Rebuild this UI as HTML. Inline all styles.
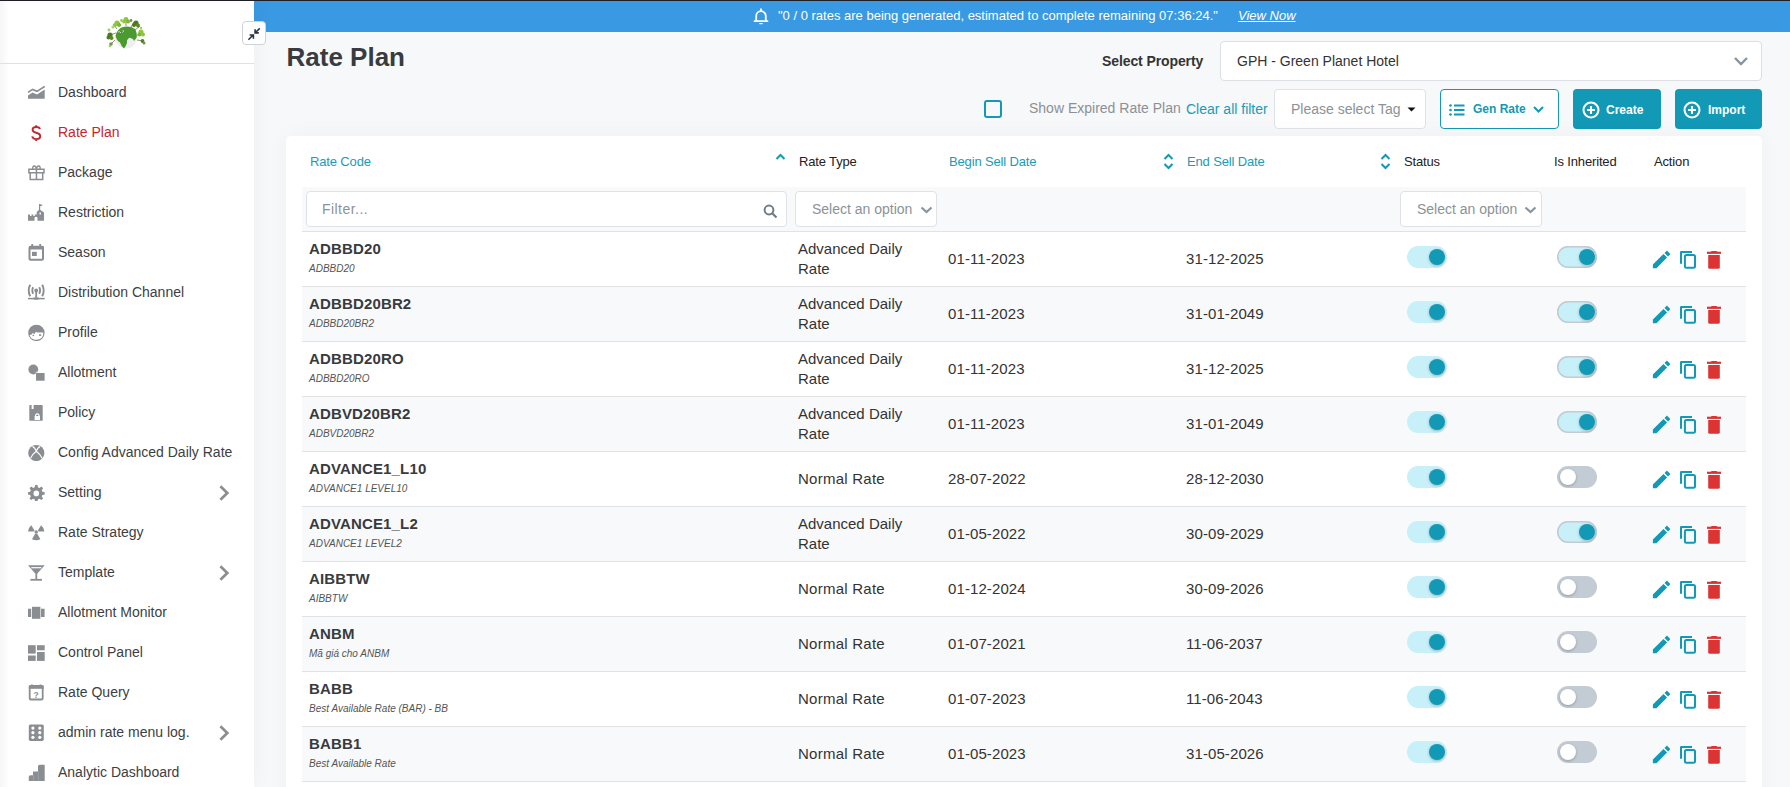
<!DOCTYPE html>
<html><head><meta charset="utf-8">
<style>
*{box-sizing:border-box;margin:0;padding:0}
html,body{width:1790px;height:787px;overflow:hidden;background:#f7f8fa;font-family:"Liberation Sans",sans-serif;color:#333}
.abs{position:absolute}
svg{display:block}
#topline{position:absolute;left:0;top:0;width:1790px;height:1px;background:#1e1f24;z-index:5}
#sidebar{position:absolute;left:0;top:1px;width:254px;height:786px;background:#fff;box-shadow:0 0 22px rgba(0,0,0,.045);z-index:2}
#sidebar .sep{position:absolute;left:0;top:62px;width:254px;height:1px;background:#dfe2e3}
.mi{position:absolute;left:0;width:254px;height:40px;font-size:14px;color:#3c4043}
.mi span{position:absolute;left:58px;top:1px;line-height:40px;white-space:nowrap}
.mi svg{position:absolute}
.mi.act{color:#c1272d}
#banner{position:absolute;left:254px;top:1px;width:1536px;height:31px;background:#3999e2;color:#fff;font-size:13px;z-index:1}
#collapse{position:absolute;left:242px;top:21px;width:24px;height:24px;background:#fff;border:1px solid #cfd3d6;border-radius:4px;z-index:3}
h1{position:absolute;left:286.5px;top:42px;font-size:26px;font-weight:bold;color:#383c40;line-height:30px}
.lbl{position:absolute;white-space:nowrap}
.box{position:absolute;background:#fff;border:1px solid #dfe2e6;border-radius:4px}
.btn{position:absolute;background:#1299b6;border-radius:4px;color:#fff;font-weight:bold;font-size:12px}
#card{position:absolute;left:286px;top:136px;width:1476px;height:700px;background:#fff;border-radius:5px;box-shadow:0 0 24px rgba(0,0,0,.04)}
.th{position:absolute;top:152px;font-size:13px;line-height:20px;white-space:nowrap;color:#222;letter-spacing:-0.15px}
.teal{color:#1a9bb7}
#frow{position:absolute;left:302px;top:187px;width:1444px;height:45px;background:#f8f9fa;border-bottom:1px solid #e0e2e4}
.row{position:absolute;left:302px;width:1444px;height:55px;border-bottom:1px solid #e0e2e4;background:#fff}
.row.alt{background:#f8f9fa}
.code{position:absolute;left:7px;top:7px;font-size:15px;font-weight:bold;color:#383b3e;line-height:20px;white-space:nowrap;letter-spacing:0.15px}
.sub{position:absolute;left:7px;top:31px;font-size:10px;font-style:italic;color:#555;line-height:12px;white-space:nowrap}
.rt{position:absolute;left:496px;font-size:15px;line-height:20px;color:#333;white-space:nowrap}
.dt{position:absolute;font-size:15px;line-height:20px;color:#333;top:17px;letter-spacing:0.1px}
.tg{position:absolute;top:14px;width:40px;height:22px;border-radius:11px}
.tg.on{background:#c8f0f8}
.tg.off{background:#c3cbd4}
.tg .k{position:absolute;top:3px;width:16px;height:16px;border-radius:50%;box-shadow:0 1px 3px rgba(0,0,0,.25)}
.tg.on .k{left:22px;background:#1299b6}
.tg.off .k{left:3px;background:#fff}
.tg.bd{box-shadow:inset 0 0 0 1.5px #c3cad3}
.ic{position:absolute}
.ph{color:#8b9298}
</style></head>
<body>
<div id="topline"></div>
<div id="sidebar">
  <svg class="abs" style="left:104px;top:14px" width="44" height="36" viewBox="0 0 44 36">
<g stroke="#7a5a50" stroke-width="0.9" fill="none" opacity="0.8">
<path d="M12 18 L6 20 M13 14 L9 9 M17 11 L14 6 M22 11 L22 5 M27 12 L30 7 M31 15 L36 11 M33 20 L38 19 M33 25 L39 26 M11 25 L7 29"/>
</g>
<g>
<circle cx="6" cy="20" r="2.6" fill="#4d7a1e"/><circle cx="4.5" cy="22.5" r="2" fill="#4d7a1e"/><circle cx="7.5" cy="23" r="2" fill="#5a8a24"/>
<circle cx="13" cy="8" r="2.6" fill="#8cc83c"/><circle cx="11" cy="10" r="2" fill="#8cc83c"/><circle cx="15" cy="10" r="2" fill="#7ab833"/>
<circle cx="9" cy="12" r="1.6" fill="#a8d080"/>
<circle cx="22" cy="4.5" r="2.4" fill="#8cc83c"/><circle cx="20" cy="6.5" r="2" fill="#8cc83c"/><circle cx="24" cy="6.5" r="2" fill="#7ab833"/>
<circle cx="17.5" cy="5.5" r="1.4" fill="#9ccc66"/><circle cx="27" cy="5.5" r="1.4" fill="#6a9a40"/>
<circle cx="32" cy="8" r="2.6" fill="#4d7a1e"/><circle cx="30" cy="10" r="2" fill="#4d7a1e"/><circle cx="34" cy="10.5" r="2" fill="#5a8a24"/>
<circle cx="37" cy="17" r="2.6" fill="#8cc83c"/><circle cx="35.5" cy="19.5" r="2" fill="#7ab833"/><circle cx="39" cy="19.5" r="2" fill="#8cc83c"/>
<circle cx="38.5" cy="26" r="1.9" fill="#4f8022"/><circle cx="40" cy="28" r="1.5" fill="#6a9a40"/>
<circle cx="7" cy="29" r="1.8" fill="#6a9a40"/><circle cx="6" cy="31" r="1.3" fill="#9ccc66"/>
<circle cx="37" cy="13" r="1.2" fill="#9ccc66"/><circle cx="5" cy="15" r="1.4" fill="#9ccc66"/>
</g>
<circle cx="22" cy="22.5" r="11" fill="#efefef"/>
<path d="M11.5 21 Q13 14 19 12 Q26 10.5 31 14 Q33.5 18 32.5 23 Q31 24.5 30 26 Q29 23 27.5 23.5 Q25.5 22 24 24 Q22.5 25 23 28 Q22 31 20 33.5 Q17 31 16 27.5 Q13 26 11.5 21Z" fill="#4a9a30"/>
<path d="M14 17 Q16 16 17 18 M19 15 Q20 17 18.5 17.5" stroke="#efefef" stroke-width="0.8" fill="none"/>
</svg>
  <div class="abs" style="left:0;top:0;width:10px;height:786px;background:linear-gradient(to right,rgba(0,0,0,.035),rgba(0,0,0,0))"></div><div class="sep"></div>
  <div class="mi" style="top:70px"><svg style="left:27px;top:12px" width="18" height="18" viewBox="0 0 18 18"><path d="M1 12.6 L5.5 9.6 L10 11.6 L17.7 6.6 V15.8 H1Z" fill="#8a8e92"/><path d="M1 9.4 L5.5 6.4 L10 8.4 L17.7 3.4" stroke="#8a8e92" stroke-width="1.7" fill="none"/></svg><span>Dashboard</span></div><div class="mi act" style="top:110px"><svg style="left:27px;top:12px" width="18" height="18" viewBox="0 0 18 18"><path d="M12.9 6.2 Q12.6 4 9.2 4 Q5.6 4 5.6 6.8 Q5.6 9 9.2 9.8 Q13.2 10.6 13.2 13.2 Q13.2 16.1 9.2 16.1 Q5.8 16.1 5.2 13.4 M9.2 2.2 V4.4 M9.2 15.8 V17.9" fill="none" stroke="#c1272d" stroke-width="1.9"/></svg><span>Rate Plan</span></div><div class="mi" style="top:150px"><svg style="left:27px;top:12px" width="18" height="18" viewBox="0 0 18 18"><path d="M1.9 6.2 H17 V9.8 H1.9Z M3.2 9.8 H15.7 V16.4 H3.2Z" fill="none" stroke="#8a8e92" stroke-width="1.5"/><path d="M9.45 6.2 V16.4" stroke="#8a8e92" stroke-width="1.5"/><path d="M9.4 6 Q9 3 7.2 3 Q5.4 3 5.8 6 M9.5 6 Q9.9 3 11.7 3 Q13.5 3 13.1 6" fill="none" stroke="#8a8e92" stroke-width="1.4"/></svg><span>Package</span></div><div class="mi" style="top:190px"><svg style="left:27px;top:12px" width="18" height="18" viewBox="0 0 18 18"><path d="M1 17.8 V11.5 H3 V13 H4.5 V11.5 H6.3 V13 H7.8 V11.5 H9.7 V9 L12 6.8 V1 H13 L16 2.2 L13.2 3.3 V6.8 L17 9.5 V17.8 H10.5 V14.5 Q9 13 7.5 14.5 V17.8Z" fill="#8a8e92"/><rect x="12.5" y="9.5" width="1.4" height="2" fill="#fff"/></svg><span>Restriction</span></div><div class="mi" style="top:230px"><svg style="left:27px;top:12px" width="18" height="18" viewBox="0 0 18 18"><rect x="2.5" y="3.7" width="13.5" height="13" rx="1" fill="none" stroke="#8a8e92" stroke-width="2"/><rect x="2" y="3" width="14.5" height="3.5" fill="#8a8e92"/><rect x="4.3" y="1" width="1.8" height="3" fill="#8a8e92"/><rect x="12.3" y="1" width="1.8" height="3" fill="#8a8e92"/><rect x="5" y="8.8" width="4.8" height="4.2" fill="#8a8e92"/></svg><span>Season</span></div><div class="mi" style="top:270px"><svg style="left:27px;top:12px" width="18" height="18" viewBox="0 0 18 18"><circle cx="9.2" cy="7.5" r="1.9" fill="#8a8e92"/><path d="M9.2 9 V14.5" stroke="#8a8e92" stroke-width="1.8"/><path d="M1 15.6 H17.7" stroke="#8a8e92" stroke-width="1.5"/><ellipse cx="9.2" cy="15.5" rx="3" ry="1.3" fill="#8a8e92"/><path d="M6.2 4.3 Q4.4 7.5 6.2 10.7 M12.2 4.3 Q14 7.5 12.2 10.7 M3.2 1.8 Q0.2 7.5 3.2 13.2 M15.2 1.8 Q18.2 7.5 15.2 13.2" fill="none" stroke="#8a8e92" stroke-width="1.9"/></svg><span>Distribution Channel</span></div><div class="mi" style="top:310px"><svg style="left:27px;top:12px" width="18" height="18" viewBox="0 0 18 18"><circle cx="9.4" cy="9.9" r="8.2" fill="#8a8e92"/><path d="M2.6 12.4 Q3.6 11 5 11.6 L5.4 10 L7.6 10.9 L8.8 8.8 Q10 9.9 11.6 9.4 L16.2 9.4 Q16.6 14.6 12.2 16.3 Q9.2 17.3 6.4 16.2 Q3.4 15 2.6 12.4Z" fill="#fff"/><rect x="5.6" y="11.8" width="1.5" height="1.3" fill="#8a8e92"/><rect x="12" y="11.3" width="2.2" height="1.6" fill="#8a8e92"/></svg><span>Profile</span></div><div class="mi" style="top:350px"><svg style="left:27px;top:12px" width="18" height="18" viewBox="0 0 18 18"><circle cx="6.3" cy="6.5" r="4.9" fill="#8a8e92"/><rect x="9" y="10" width="8.6" height="7.7" fill="#8a8e92"/><path d="M8.6 10 L10.4 8.6" stroke="#fff" stroke-width="0.9"/></svg><span>Allotment</span></div><div class="mi" style="top:390px"><svg style="left:27px;top:12px" width="18" height="18" viewBox="0 0 18 18"><rect x="2.3" y="2" width="13.4" height="15.7" rx="0.8" fill="#8a8e92"/><rect x="4.6" y="2" width="2" height="4" fill="#fff"/><path d="M7.6 17 V13 H13 V17Z" fill="#fff"/><path d="M8.6 13 V12 Q10.3 9.6 12 12 V13" stroke="#fff" stroke-width="1.2" fill="none"/></svg><span>Policy</span></div><div class="mi" style="top:430px"><svg style="left:27px;top:12px" width="18" height="18" viewBox="0 0 18 18"><circle cx="9.3" cy="10" r="8.1" fill="#8a8e92"/><path d="M3.5 15.3 Q6 10.5 9.3 8.2 Q12.6 10.5 15.1 15.3 M5.5 3.6 Q7.6 4.2 9.3 8.2 Q11 4.2 13.1 3.6" stroke="#fff" stroke-width="1.1" fill="none"/></svg><span>Config Advanced Daily Rate</span></div><div class="mi" style="top:470px"><svg style="left:27px;top:12px" width="18" height="18" viewBox="0 0 18 18"><path d="M8.1 1.9 H10.5 L10.9 4.2 L12.4 5 L14.4 3.6 L16.1 5.3 L14.8 7.3 L15.4 8.8 L17.7 9.2 V11.6 L15.4 12 L14.8 13.4 L16.1 15.4 L14.4 17.1 L12.4 15.8 L10.9 16.5 L10.5 18.5 H8.1 L7.7 16.5 L6.2 15.8 L4.2 17.1 L2.5 15.4 L3.8 13.4 L3.2 12 L1 11.6 V9.2 L3.2 8.8 L3.8 7.3 L2.5 5.3 L4.2 3.6 L6.2 5 L7.7 4.2Z" fill="#8a8e92"/><circle cx="9.3" cy="10.4" r="2.8" fill="#fff"/></svg><span>Setting</span><svg style="left:218px;top:14px" width="12" height="16" viewBox="0 0 12 16"><path d="M2.4 1.2 L9.3 8 L2.4 14.8" fill="none" stroke="#8a8e92" stroke-width="2.7"/></svg></div><div class="mi" style="top:510px"><svg style="left:27px;top:12px" width="18" height="18" viewBox="0 0 18 18"><circle cx="9.2" cy="9" r="1.7" fill="#8a8e92"/><path d="M7.7 7.8 L4.3 2.3 Q1.6 4.4 1 8.6 H6.6 Q6.8 8.1 7.7 7.8Z M10.7 7.8 L14.1 2.3 Q16.8 4.4 17.4 8.6 H11.8 Q11.6 8.1 10.7 7.8Z M8.1 10.8 L10.3 10.8 L13.4 16.2 Q9.2 18.2 5 16.2Z" fill="#8a8e92"/></svg><span>Rate Strategy</span></div><div class="mi" style="top:550px"><svg style="left:27px;top:12px" width="18" height="18" viewBox="0 0 18 18"><path d="M1 2.2 H17.7 L10.2 10.8 V16 H8.4 V10.8Z" fill="#8a8e92"/><path d="M4.3 4.7 H14.4" stroke="#fff" stroke-width="1.2"/><path d="M3.4 16.8 H15" stroke="#8a8e92" stroke-width="1.8"/></svg><span>Template</span><svg style="left:218px;top:14px" width="12" height="16" viewBox="0 0 12 16"><path d="M2.4 1.2 L9.3 8 L2.4 14.8" fill="none" stroke="#8a8e92" stroke-width="2.7"/></svg></div><div class="mi" style="top:590px"><svg style="left:27px;top:12px" width="18" height="18" viewBox="0 0 18 18"><rect x="1" y="5.7" width="3.2" height="8.3" fill="#8a8e92"/><rect x="14" y="5.7" width="3.6" height="8.3" fill="#8a8e92"/><rect x="5" y="3.8" width="8.4" height="12" fill="#8a8e92"/></svg><span>Allotment Monitor</span></div><div class="mi" style="top:630px"><svg style="left:27px;top:12px" width="18" height="18" viewBox="0 0 18 18"><rect x="1" y="2.2" width="7.7" height="8.4" fill="#8a8e92"/><rect x="10" y="2.2" width="7.7" height="5.1" fill="#8a8e92"/><rect x="1" y="12.5" width="7.7" height="5.4" fill="#8a8e92"/><rect x="10" y="9" width="7.7" height="8.9" fill="#8a8e92"/></svg><span>Control Panel</span></div><div class="mi" style="top:670px"><svg style="left:27px;top:12px" width="18" height="18" viewBox="0 0 18 18"><rect x="2.7" y="3" width="13" height="13.5" rx="1" fill="none" stroke="#8a8e92" stroke-width="1.8"/><rect x="1.8" y="2.5" width="14.9" height="3.3" fill="#8a8e92"/><rect x="4" y="1.5" width="1.8" height="2" fill="#8a8e92"/><rect x="12.6" y="1.5" width="1.8" height="2" fill="#8a8e92"/><text x="9.2" y="14.6" font-size="8.5" font-weight="bold" text-anchor="middle" fill="#8a8e92" font-family="Liberation Sans">?</text></svg><span>Rate Query</span></div><div class="mi" style="top:710px"><svg style="left:27px;top:12px" width="18" height="18" viewBox="0 0 18 18"><rect x="1.8" y="1.5" width="15" height="16.4" rx="1.6" fill="#8a8e92"/><circle cx="5.9" cy="5.1" r="1.6" fill="#fff"/><circle cx="5.9" cy="9.7" r="1.6" fill="#fff"/><circle cx="5.9" cy="14.3" r="1.6" fill="#fff"/><circle cx="12.8" cy="5.1" r="1.6" fill="#fff"/><circle cx="12.8" cy="9.7" r="1.6" fill="#fff"/><circle cx="12.8" cy="14.3" r="1.6" fill="#fff"/></svg><span>admin rate menu log.</span><svg style="left:218px;top:14px" width="12" height="16" viewBox="0 0 12 16"><path d="M2.4 1.2 L9.3 8 L2.4 14.8" fill="none" stroke="#8a8e92" stroke-width="2.7"/></svg></div><div class="mi" style="top:750px"><svg style="left:27px;top:12px" width="18" height="18" viewBox="0 0 18 18"><path d="M1.8 18 V13.8 Q1.8 12.2 3.4 12.2 H6 V8.6 H11 V3.4 Q11 1.8 12.6 1.8 H17.7 V18Z" fill="#8a8e92"/><path d="M6.5 12.2 V18 M11.3 8.6 V18" stroke="#a8abae" stroke-width="0.6"/></svg><span>Analytic Dashboard</span></div>
</div>
<div id="banner">
  <svg class="abs" style="left:499px;top:7px" width="16" height="17" viewBox="0 0 16 17"><path d="M8 1.2 V2.4 M3.2 13 V8 A4.8 4.8 0 0 1 12.8 8 V13 M1.5 13.2 H14.5" stroke="#fff" stroke-width="1.8" fill="none" stroke-linecap="round"/><path d="M6.3 15 H9.7 V16.2 H6.3Z" fill="#fff"/></svg>
  <div class="lbl" style="left:524px;top:7px;line-height:16px">"0 / 0 rates are being generated, estimated to complete remaining 07:36:24."</div>
  <div class="lbl" style="left:984px;top:7px;line-height:16px;font-style:italic;text-decoration:underline">View Now</div>
</div>
<div id="collapse"><svg class="abs" style="left:-1px;top:-1px" width="24" height="24" viewBox="0 0 24 24"><path d="M17.8 7.3 L13.4 11.5 M13.1 8.2 V11.9 H16.8 M6.4 18.7 L10.9 14.2 M7.6 14 H11.4 V17.8" stroke="#2b3440" stroke-width="1.6" fill="none"/></svg></div>
<h1>Rate Plan</h1>

<div class="lbl" style="left:1102px;top:53px;font-size:14px;font-weight:bold;color:#333;line-height:16px;letter-spacing:-0.1px">Select Property</div>
<div class="box" style="left:1220px;top:41px;width:542px;height:40px;border-color:#dcdfe3">
  <div class="lbl" style="left:16px;top:11px;font-size:14px;line-height:16px;color:#333">GPH - Green Planet Hotel</div>
  <svg class="abs" style="left:512px;top:14px" width="16" height="10" viewBox="0 0 16 10"><path d="M2 2 L8 8 L14 2" fill="none" stroke="#8795a1" stroke-width="2.4"/></svg>
</div>

<div class="abs" style="left:984px;top:100px;width:18px;height:18px;border:2px solid #1299b6;border-radius:3px"></div>
<div class="lbl" style="left:1029px;top:100px;font-size:14px;line-height:16px;color:#8c9096">Show Expired Rate Plan</div>
<div class="lbl teal" style="left:1186px;top:101px;font-size:14px;line-height:16px">Clear all filter</div>
<div class="box" style="left:1274px;top:89px;width:152px;height:40px">
  <div class="lbl ph" style="left:16px;top:11px;font-size:14px;line-height:16px">Please select Tag</div>
  <svg class="abs" style="left:132px;top:17px" width="9" height="5" viewBox="0 0 9 5"><path d="M0.5 0.5 H8.5 L4.5 4.5Z" fill="#111"/></svg>
</div>
<div class="box" style="left:1440px;top:89px;width:119px;height:40px;border:1.5px solid #1299b6">
  <svg class="abs" style="left:8px;top:14px" width="16" height="12" viewBox="0 0 16 12"><path d="M5 1.5 H15.5 M5 6 H15.5 M5 10.5 H15.5" stroke="#1299b6" stroke-width="1.9"/><circle cx="1.5" cy="1.5" r="1.35" fill="#1299b6"/><circle cx="1.5" cy="6" r="1.35" fill="#1299b6"/><circle cx="1.5" cy="10.5" r="1.35" fill="#1299b6"/></svg>
  <div class="lbl" style="left:32px;top:12px;font-size:12px;font-weight:bold;line-height:14px;color:#1299b6">Gen Rate</div>
  <svg class="abs" style="left:92px;top:16px" width="11" height="7" viewBox="0 0 11 7"><path d="M1 1 L5.5 5.5 L10 1" fill="none" stroke="#1299b6" stroke-width="2"/></svg>
</div>
<div class="btn" style="left:1573px;top:89px;width:88px;height:40px">
  <svg class="abs" style="left:9px;top:12px" width="18" height="18" viewBox="0 0 18 18"><circle cx="9" cy="9" r="7.5" fill="none" stroke="#fff" stroke-width="2"/><path d="M9 5 V13 M5 9 H13" stroke="#fff" stroke-width="2.1"/></svg>
  <div class="lbl" style="left:33px;top:14px;line-height:14px">Create</div>
</div>
<div class="btn" style="left:1675px;top:89px;width:87px;height:40px">
  <svg class="abs" style="left:8px;top:12px" width="18" height="18" viewBox="0 0 18 18"><circle cx="9" cy="9" r="7.5" fill="none" stroke="#fff" stroke-width="2"/><path d="M9 5 V13 M5 9 H13" stroke="#fff" stroke-width="2.1"/></svg>
  <div class="lbl" style="left:33px;top:14px;line-height:14px">Import</div>
</div>

<div id="card"></div>
<div class="th teal" style="left:310px">Rate Code</div>
<svg class="abs" style="left:775px;top:153px" width="11" height="8" viewBox="0 0 11 8"><path d="M1.5 6 L5.5 2 L9.5 6" fill="none" stroke="#1299b6" stroke-width="2"/></svg>
<div class="th" style="left:799px">Rate Type</div>
<div class="th teal" style="left:949px">Begin Sell Date</div>
<svg class="abs" style="left:1163px;top:153px" width="11" height="18" viewBox="0 0 11 18"><path d="M1.5 6 L5.5 2 L9.5 6 M1.5 11 L5.5 15 L9.5 11" fill="none" stroke="#1299b6" stroke-width="2"/></svg>
<div class="th teal" style="left:1187px">End Sell Date</div>
<svg class="abs" style="left:1380px;top:153px" width="11" height="18" viewBox="0 0 11 18"><path d="M1.5 6 L5.5 2 L9.5 6 M1.5 11 L5.5 15 L9.5 11" fill="none" stroke="#1299b6" stroke-width="2"/></svg>
<div class="th" style="left:1404px">Status</div>
<div class="th" style="left:1554px">Is Inherited</div>
<div class="th" style="left:1654px">Action</div>

<div id="frow">
  <div class="box" style="left:4px;top:4px;width:481px;height:36px">
    <div class="lbl ph" style="left:15px;top:9px;font-size:14px;line-height:16px;letter-spacing:0.45px">Filter...</div>
    <svg class="abs" style="left:456px;top:12px" width="15" height="15" viewBox="0 0 15 15"><circle cx="6" cy="6" r="4.4" fill="none" stroke="#6f7c87" stroke-width="2"/><path d="M9.2 9.2 L13.5 13.5" stroke="#6f7c87" stroke-width="2.2"/></svg>
  </div>
  <div class="box" style="left:493px;top:4px;width:142px;height:36px">
    <div class="lbl ph" style="left:16px;top:9px;font-size:14px;line-height:16px">Select an option</div>
    <svg class="abs" style="left:124px;top:14px" width="13" height="8" viewBox="0 0 13 8"><path d="M1.5 1.5 L6.5 6 L11.5 1.5" fill="none" stroke="#8795a1" stroke-width="2.2"/></svg>
  </div>
  <div class="box" style="left:1098px;top:4px;width:142px;height:36px">
    <div class="lbl ph" style="left:16px;top:9px;font-size:14px;line-height:16px">Select an option</div>
    <svg class="abs" style="left:123px;top:14px" width="13" height="8" viewBox="0 0 13 8"><path d="M1.5 1.5 L6.5 6 L11.5 1.5" fill="none" stroke="#8795a1" stroke-width="2.2"/></svg>
  </div>
</div>
<div class="row" style="top:232px"><div class="code">ADBBD20</div><div class="sub">ADBBD20</div><div class="rt" style="top:7px">Advanced Daily<br>Rate</div><div class="dt" style="left:646px">01-11-2023</div><div class="dt" style="left:884px">31-12-2025</div><div class="tg on" style="left:1105px"><div class="k"></div></div><div class="tg on bd" style="left:1255px"><div class="k"></div></div><svg class="ic" style="left:1347.8px;top:16px" width="23" height="23" viewBox="0 0 24 24"><path d="M3 17.25V21h3.75L17.81 9.94l-3.75-3.75L3 17.25zM20.71 7.04c.39-.39.39-1.02 0-1.41l-2.34-2.34c-.39-.39-1.02-.39-1.41 0l-1.83 1.83 3.75 3.75 1.83-1.83z" fill="#1299b6"/></svg><svg class="ic" style="left:1378px;top:19px" width="17" height="19" viewBox="0 0 17 19"><path d="M1 12.8 V1.2 Q1 1 1.2 1 H12" fill="none" stroke="#1299b6" stroke-width="2"/><rect x="4.9" y="4.1" width="10.1" height="12.7" rx="1.5" fill="none" stroke="#1299b6" stroke-width="2"/></svg><svg class="ic" style="left:1405px;top:19px" width="14" height="18" viewBox="0 0 14 18"><path d="M0 1.8 H14" stroke="#dc3333" stroke-width="2.2"/><path d="M4 1 Q4 0 5 0 H9.2 Q10.2 0 10.2 1Z" fill="#dc3333"/><path d="M1.2 4 H12.8 V16.3 Q12.8 17.8 11.3 17.8 H2.7 Q1.2 17.8 1.2 16.3Z" fill="#dc3333"/></svg></div><div class="row alt" style="top:287px"><div class="code">ADBBD20BR2</div><div class="sub">ADBBD20BR2</div><div class="rt" style="top:7px">Advanced Daily<br>Rate</div><div class="dt" style="left:646px">01-11-2023</div><div class="dt" style="left:884px">31-01-2049</div><div class="tg on" style="left:1105px"><div class="k"></div></div><div class="tg on bd" style="left:1255px"><div class="k"></div></div><svg class="ic" style="left:1347.8px;top:16px" width="23" height="23" viewBox="0 0 24 24"><path d="M3 17.25V21h3.75L17.81 9.94l-3.75-3.75L3 17.25zM20.71 7.04c.39-.39.39-1.02 0-1.41l-2.34-2.34c-.39-.39-1.02-.39-1.41 0l-1.83 1.83 3.75 3.75 1.83-1.83z" fill="#1299b6"/></svg><svg class="ic" style="left:1378px;top:19px" width="17" height="19" viewBox="0 0 17 19"><path d="M1 12.8 V1.2 Q1 1 1.2 1 H12" fill="none" stroke="#1299b6" stroke-width="2"/><rect x="4.9" y="4.1" width="10.1" height="12.7" rx="1.5" fill="none" stroke="#1299b6" stroke-width="2"/></svg><svg class="ic" style="left:1405px;top:19px" width="14" height="18" viewBox="0 0 14 18"><path d="M0 1.8 H14" stroke="#dc3333" stroke-width="2.2"/><path d="M4 1 Q4 0 5 0 H9.2 Q10.2 0 10.2 1Z" fill="#dc3333"/><path d="M1.2 4 H12.8 V16.3 Q12.8 17.8 11.3 17.8 H2.7 Q1.2 17.8 1.2 16.3Z" fill="#dc3333"/></svg></div><div class="row" style="top:342px"><div class="code">ADBBD20RO</div><div class="sub">ADBBD20RO</div><div class="rt" style="top:7px">Advanced Daily<br>Rate</div><div class="dt" style="left:646px">01-11-2023</div><div class="dt" style="left:884px">31-12-2025</div><div class="tg on" style="left:1105px"><div class="k"></div></div><div class="tg on bd" style="left:1255px"><div class="k"></div></div><svg class="ic" style="left:1347.8px;top:16px" width="23" height="23" viewBox="0 0 24 24"><path d="M3 17.25V21h3.75L17.81 9.94l-3.75-3.75L3 17.25zM20.71 7.04c.39-.39.39-1.02 0-1.41l-2.34-2.34c-.39-.39-1.02-.39-1.41 0l-1.83 1.83 3.75 3.75 1.83-1.83z" fill="#1299b6"/></svg><svg class="ic" style="left:1378px;top:19px" width="17" height="19" viewBox="0 0 17 19"><path d="M1 12.8 V1.2 Q1 1 1.2 1 H12" fill="none" stroke="#1299b6" stroke-width="2"/><rect x="4.9" y="4.1" width="10.1" height="12.7" rx="1.5" fill="none" stroke="#1299b6" stroke-width="2"/></svg><svg class="ic" style="left:1405px;top:19px" width="14" height="18" viewBox="0 0 14 18"><path d="M0 1.8 H14" stroke="#dc3333" stroke-width="2.2"/><path d="M4 1 Q4 0 5 0 H9.2 Q10.2 0 10.2 1Z" fill="#dc3333"/><path d="M1.2 4 H12.8 V16.3 Q12.8 17.8 11.3 17.8 H2.7 Q1.2 17.8 1.2 16.3Z" fill="#dc3333"/></svg></div><div class="row alt" style="top:397px"><div class="code">ADBVD20BR2</div><div class="sub">ADBVD20BR2</div><div class="rt" style="top:7px">Advanced Daily<br>Rate</div><div class="dt" style="left:646px">01-11-2023</div><div class="dt" style="left:884px">31-01-2049</div><div class="tg on" style="left:1105px"><div class="k"></div></div><div class="tg on bd" style="left:1255px"><div class="k"></div></div><svg class="ic" style="left:1347.8px;top:16px" width="23" height="23" viewBox="0 0 24 24"><path d="M3 17.25V21h3.75L17.81 9.94l-3.75-3.75L3 17.25zM20.71 7.04c.39-.39.39-1.02 0-1.41l-2.34-2.34c-.39-.39-1.02-.39-1.41 0l-1.83 1.83 3.75 3.75 1.83-1.83z" fill="#1299b6"/></svg><svg class="ic" style="left:1378px;top:19px" width="17" height="19" viewBox="0 0 17 19"><path d="M1 12.8 V1.2 Q1 1 1.2 1 H12" fill="none" stroke="#1299b6" stroke-width="2"/><rect x="4.9" y="4.1" width="10.1" height="12.7" rx="1.5" fill="none" stroke="#1299b6" stroke-width="2"/></svg><svg class="ic" style="left:1405px;top:19px" width="14" height="18" viewBox="0 0 14 18"><path d="M0 1.8 H14" stroke="#dc3333" stroke-width="2.2"/><path d="M4 1 Q4 0 5 0 H9.2 Q10.2 0 10.2 1Z" fill="#dc3333"/><path d="M1.2 4 H12.8 V16.3 Q12.8 17.8 11.3 17.8 H2.7 Q1.2 17.8 1.2 16.3Z" fill="#dc3333"/></svg></div><div class="row" style="top:452px"><div class="code">ADVANCE1_L10</div><div class="sub">ADVANCE1 LEVEL10</div><div class="rt" style="top:17px;letter-spacing:0.25px">Normal Rate</div><div class="dt" style="left:646px">28-07-2022</div><div class="dt" style="left:884px">28-12-2030</div><div class="tg on" style="left:1105px"><div class="k"></div></div><div class="tg off" style="left:1255px"><div class="k"></div></div><svg class="ic" style="left:1347.8px;top:16px" width="23" height="23" viewBox="0 0 24 24"><path d="M3 17.25V21h3.75L17.81 9.94l-3.75-3.75L3 17.25zM20.71 7.04c.39-.39.39-1.02 0-1.41l-2.34-2.34c-.39-.39-1.02-.39-1.41 0l-1.83 1.83 3.75 3.75 1.83-1.83z" fill="#1299b6"/></svg><svg class="ic" style="left:1378px;top:19px" width="17" height="19" viewBox="0 0 17 19"><path d="M1 12.8 V1.2 Q1 1 1.2 1 H12" fill="none" stroke="#1299b6" stroke-width="2"/><rect x="4.9" y="4.1" width="10.1" height="12.7" rx="1.5" fill="none" stroke="#1299b6" stroke-width="2"/></svg><svg class="ic" style="left:1405px;top:19px" width="14" height="18" viewBox="0 0 14 18"><path d="M0 1.8 H14" stroke="#dc3333" stroke-width="2.2"/><path d="M4 1 Q4 0 5 0 H9.2 Q10.2 0 10.2 1Z" fill="#dc3333"/><path d="M1.2 4 H12.8 V16.3 Q12.8 17.8 11.3 17.8 H2.7 Q1.2 17.8 1.2 16.3Z" fill="#dc3333"/></svg></div><div class="row alt" style="top:507px"><div class="code">ADVANCE1_L2</div><div class="sub">ADVANCE1 LEVEL2</div><div class="rt" style="top:7px">Advanced Daily<br>Rate</div><div class="dt" style="left:646px">01-05-2022</div><div class="dt" style="left:884px">30-09-2029</div><div class="tg on" style="left:1105px"><div class="k"></div></div><div class="tg on bd" style="left:1255px"><div class="k"></div></div><svg class="ic" style="left:1347.8px;top:16px" width="23" height="23" viewBox="0 0 24 24"><path d="M3 17.25V21h3.75L17.81 9.94l-3.75-3.75L3 17.25zM20.71 7.04c.39-.39.39-1.02 0-1.41l-2.34-2.34c-.39-.39-1.02-.39-1.41 0l-1.83 1.83 3.75 3.75 1.83-1.83z" fill="#1299b6"/></svg><svg class="ic" style="left:1378px;top:19px" width="17" height="19" viewBox="0 0 17 19"><path d="M1 12.8 V1.2 Q1 1 1.2 1 H12" fill="none" stroke="#1299b6" stroke-width="2"/><rect x="4.9" y="4.1" width="10.1" height="12.7" rx="1.5" fill="none" stroke="#1299b6" stroke-width="2"/></svg><svg class="ic" style="left:1405px;top:19px" width="14" height="18" viewBox="0 0 14 18"><path d="M0 1.8 H14" stroke="#dc3333" stroke-width="2.2"/><path d="M4 1 Q4 0 5 0 H9.2 Q10.2 0 10.2 1Z" fill="#dc3333"/><path d="M1.2 4 H12.8 V16.3 Q12.8 17.8 11.3 17.8 H2.7 Q1.2 17.8 1.2 16.3Z" fill="#dc3333"/></svg></div><div class="row" style="top:562px"><div class="code">AIBBTW</div><div class="sub">AIBBTW</div><div class="rt" style="top:17px;letter-spacing:0.25px">Normal Rate</div><div class="dt" style="left:646px">01-12-2024</div><div class="dt" style="left:884px">30-09-2026</div><div class="tg on" style="left:1105px"><div class="k"></div></div><div class="tg off" style="left:1255px"><div class="k"></div></div><svg class="ic" style="left:1347.8px;top:16px" width="23" height="23" viewBox="0 0 24 24"><path d="M3 17.25V21h3.75L17.81 9.94l-3.75-3.75L3 17.25zM20.71 7.04c.39-.39.39-1.02 0-1.41l-2.34-2.34c-.39-.39-1.02-.39-1.41 0l-1.83 1.83 3.75 3.75 1.83-1.83z" fill="#1299b6"/></svg><svg class="ic" style="left:1378px;top:19px" width="17" height="19" viewBox="0 0 17 19"><path d="M1 12.8 V1.2 Q1 1 1.2 1 H12" fill="none" stroke="#1299b6" stroke-width="2"/><rect x="4.9" y="4.1" width="10.1" height="12.7" rx="1.5" fill="none" stroke="#1299b6" stroke-width="2"/></svg><svg class="ic" style="left:1405px;top:19px" width="14" height="18" viewBox="0 0 14 18"><path d="M0 1.8 H14" stroke="#dc3333" stroke-width="2.2"/><path d="M4 1 Q4 0 5 0 H9.2 Q10.2 0 10.2 1Z" fill="#dc3333"/><path d="M1.2 4 H12.8 V16.3 Q12.8 17.8 11.3 17.8 H2.7 Q1.2 17.8 1.2 16.3Z" fill="#dc3333"/></svg></div><div class="row alt" style="top:617px"><div class="code">ANBM</div><div class="sub">Mã giá cho ANBM</div><div class="rt" style="top:17px;letter-spacing:0.25px">Normal Rate</div><div class="dt" style="left:646px">01-07-2021</div><div class="dt" style="left:884px">11-06-2037</div><div class="tg on" style="left:1105px"><div class="k"></div></div><div class="tg off" style="left:1255px"><div class="k"></div></div><svg class="ic" style="left:1347.8px;top:16px" width="23" height="23" viewBox="0 0 24 24"><path d="M3 17.25V21h3.75L17.81 9.94l-3.75-3.75L3 17.25zM20.71 7.04c.39-.39.39-1.02 0-1.41l-2.34-2.34c-.39-.39-1.02-.39-1.41 0l-1.83 1.83 3.75 3.75 1.83-1.83z" fill="#1299b6"/></svg><svg class="ic" style="left:1378px;top:19px" width="17" height="19" viewBox="0 0 17 19"><path d="M1 12.8 V1.2 Q1 1 1.2 1 H12" fill="none" stroke="#1299b6" stroke-width="2"/><rect x="4.9" y="4.1" width="10.1" height="12.7" rx="1.5" fill="none" stroke="#1299b6" stroke-width="2"/></svg><svg class="ic" style="left:1405px;top:19px" width="14" height="18" viewBox="0 0 14 18"><path d="M0 1.8 H14" stroke="#dc3333" stroke-width="2.2"/><path d="M4 1 Q4 0 5 0 H9.2 Q10.2 0 10.2 1Z" fill="#dc3333"/><path d="M1.2 4 H12.8 V16.3 Q12.8 17.8 11.3 17.8 H2.7 Q1.2 17.8 1.2 16.3Z" fill="#dc3333"/></svg></div><div class="row" style="top:672px"><div class="code">BABB</div><div class="sub">Best Available Rate (BAR) - BB</div><div class="rt" style="top:17px;letter-spacing:0.25px">Normal Rate</div><div class="dt" style="left:646px">01-07-2023</div><div class="dt" style="left:884px">11-06-2043</div><div class="tg on" style="left:1105px"><div class="k"></div></div><div class="tg off" style="left:1255px"><div class="k"></div></div><svg class="ic" style="left:1347.8px;top:16px" width="23" height="23" viewBox="0 0 24 24"><path d="M3 17.25V21h3.75L17.81 9.94l-3.75-3.75L3 17.25zM20.71 7.04c.39-.39.39-1.02 0-1.41l-2.34-2.34c-.39-.39-1.02-.39-1.41 0l-1.83 1.83 3.75 3.75 1.83-1.83z" fill="#1299b6"/></svg><svg class="ic" style="left:1378px;top:19px" width="17" height="19" viewBox="0 0 17 19"><path d="M1 12.8 V1.2 Q1 1 1.2 1 H12" fill="none" stroke="#1299b6" stroke-width="2"/><rect x="4.9" y="4.1" width="10.1" height="12.7" rx="1.5" fill="none" stroke="#1299b6" stroke-width="2"/></svg><svg class="ic" style="left:1405px;top:19px" width="14" height="18" viewBox="0 0 14 18"><path d="M0 1.8 H14" stroke="#dc3333" stroke-width="2.2"/><path d="M4 1 Q4 0 5 0 H9.2 Q10.2 0 10.2 1Z" fill="#dc3333"/><path d="M1.2 4 H12.8 V16.3 Q12.8 17.8 11.3 17.8 H2.7 Q1.2 17.8 1.2 16.3Z" fill="#dc3333"/></svg></div><div class="row alt" style="top:727px"><div class="code">BABB1</div><div class="sub">Best Available Rate</div><div class="rt" style="top:17px;letter-spacing:0.25px">Normal Rate</div><div class="dt" style="left:646px">01-05-2023</div><div class="dt" style="left:884px">31-05-2026</div><div class="tg on" style="left:1105px"><div class="k"></div></div><div class="tg off" style="left:1255px"><div class="k"></div></div><svg class="ic" style="left:1347.8px;top:16px" width="23" height="23" viewBox="0 0 24 24"><path d="M3 17.25V21h3.75L17.81 9.94l-3.75-3.75L3 17.25zM20.71 7.04c.39-.39.39-1.02 0-1.41l-2.34-2.34c-.39-.39-1.02-.39-1.41 0l-1.83 1.83 3.75 3.75 1.83-1.83z" fill="#1299b6"/></svg><svg class="ic" style="left:1378px;top:19px" width="17" height="19" viewBox="0 0 17 19"><path d="M1 12.8 V1.2 Q1 1 1.2 1 H12" fill="none" stroke="#1299b6" stroke-width="2"/><rect x="4.9" y="4.1" width="10.1" height="12.7" rx="1.5" fill="none" stroke="#1299b6" stroke-width="2"/></svg><svg class="ic" style="left:1405px;top:19px" width="14" height="18" viewBox="0 0 14 18"><path d="M0 1.8 H14" stroke="#dc3333" stroke-width="2.2"/><path d="M4 1 Q4 0 5 0 H9.2 Q10.2 0 10.2 1Z" fill="#dc3333"/><path d="M1.2 4 H12.8 V16.3 Q12.8 17.8 11.3 17.8 H2.7 Q1.2 17.8 1.2 16.3Z" fill="#dc3333"/></svg></div>
</body></html>
